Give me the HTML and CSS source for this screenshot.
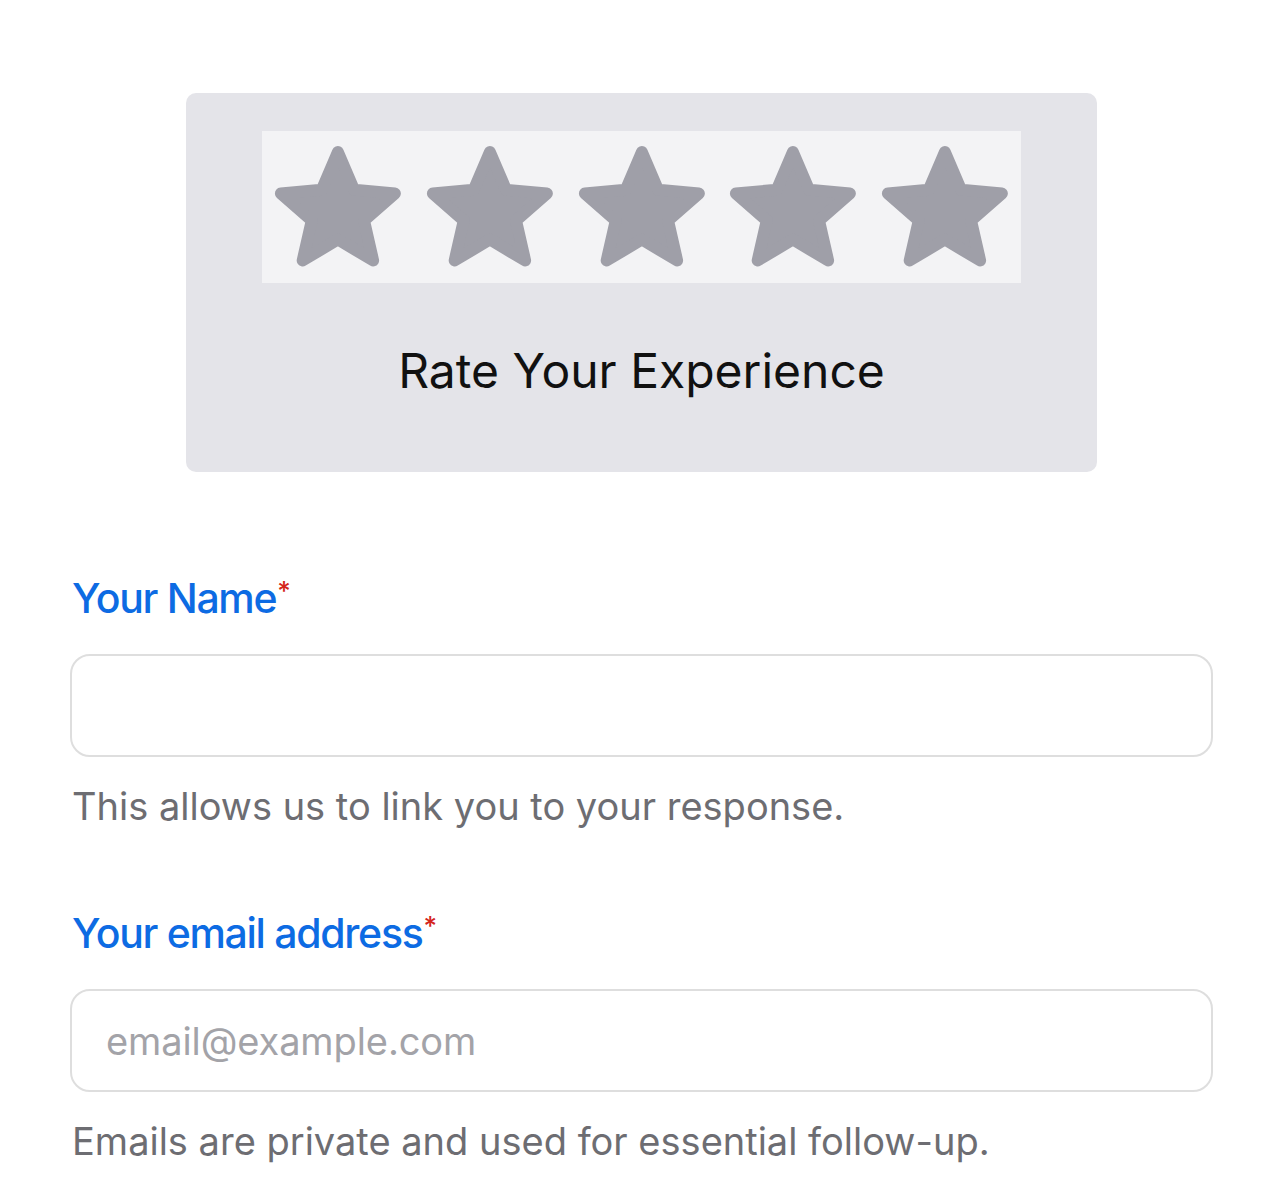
FILE: index.html
```html
<!DOCTYPE html>
<html lang="en">
<head>
<meta charset="UTF-8">
<meta name="viewport" content="width=device-width, initial-scale=1.0">
<title>Feedback</title>
<link rel="stylesheet" href="styles.css">
</head>
<body>

<div class="page">
    <div class="rating-card">
        <div class="stars">
            <svg class="star" viewBox="0 0 152 152"><polygon points="76,21 92.16,58.75 133.06,62.46 102.16,89.5 111.27,129.54 76,108.5 40.73,129.54 49.84,89.5 18.94,62.46 59.84,58.75"/></svg>
            <svg class="star" viewBox="0 0 152 152"><polygon points="76,21 92.16,58.75 133.06,62.46 102.16,89.5 111.27,129.54 76,108.5 40.73,129.54 49.84,89.5 18.94,62.46 59.84,58.75"/></svg>
            <svg class="star" viewBox="0 0 152 152"><polygon points="76,21 92.16,58.75 133.06,62.46 102.16,89.5 111.27,129.54 76,108.5 40.73,129.54 49.84,89.5 18.94,62.46 59.84,58.75"/></svg>
            <svg class="star" viewBox="0 0 152 152"><polygon points="76,21 92.16,58.75 133.06,62.46 102.16,89.5 111.27,129.54 76,108.5 40.73,129.54 49.84,89.5 18.94,62.46 59.84,58.75"/></svg>
            <svg class="star" viewBox="0 0 152 152"><polygon points="76,21 92.16,58.75 133.06,62.46 102.16,89.5 111.27,129.54 76,108.5 40.73,129.54 49.84,89.5 18.94,62.46 59.84,58.75"/></svg>
        </div>
        <div class="rating-title">Rate Your Experience</div>
    </div>

    <div class="field field-first">
        <label for="name">Your Name<span class="req">*</span></label>
        <input type="text" id="name">
        <p class="hint">This allows us to link you to your response.</p>
    </div>

    <div class="field">
        <label for="email">Your email address<span class="req">*</span></label>
        <input type="email" id="email" placeholder="email@example.com">
        <p class="hint">Emails are private and used for essential follow-up.</p>
    </div>
</div>

</body>
</html>
```

FILE: styles.css
```css
body {
    font-family: Inter, "Noto Sans", sans-serif;
    background-color: #fff;
    margin: 0;
    padding: 0;
}
.page {
    width: 1143px;
    padding: 93px 67px 0 70px;
}
.rating-card {
    width: 759px;
    margin: 0 auto;
    padding: 38px 76px 72px;
    background-color: #e4e4e9;
    border-radius: 10px;
}
.stars {
    display: flex;
    height: 152px;
    background-color: #f3f3f5;
}
.star {
    width: 152px;
    height: 152px;
    display: block;
}
/* stroke + round joins give the soft tips */
.star polygon {
    fill: #9f9fa8;
    stroke: #9f9fa8;
    stroke-width: 12;
    stroke-linejoin: round;
}
.rating-title {
    margin-top: 59px;
    font-size: 48px;
    line-height: 58px;
    text-align: center;
    color: #111;
}
.field {
    margin-top: 79px;
}
.field-first {
    margin-top: 101px;
}
label {
    display: block;
    font-size: 41px;
    line-height: 50px;
    font-weight: 500;
    letter-spacing: -1.3px;
    color: #0d6be3;
    margin-left: 2px;
}
.req {
    color: #d4251c;
    font-size: 26px;
    line-height: 35px;
    letter-spacing: 0;
    vertical-align: top;
    margin-left: 1px;
}
input {
    display: block;
    box-sizing: border-box;
    width: 100%;
    height: 103px;
    margin-top: 31px;
    padding: 0 35px 0 34px;
    border: 2px solid #dedede;
    border-radius: 20px;
    font-family: Inter, "Noto Sans", sans-serif;
    font-size: 38px;
    letter-spacing: -0.1px;
    color: #111;
    outline: none;
}
input::placeholder {
    color: #a3a3a8;
}
.hint {
    margin: 26px 0 0 2px;
    font-size: 38px;
    line-height: 46px;
    color: #6d6d72;
}
```
